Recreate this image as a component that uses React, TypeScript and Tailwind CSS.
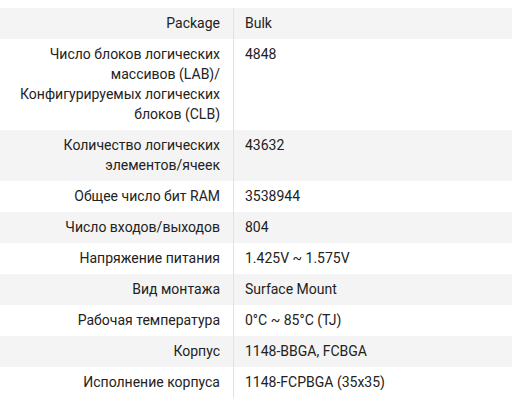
import React from "react";

const rows: [string, string][] = [
  ["Package", "Bulk"],
  ["Число блоков логических массивов (LAB)/ Конфигурируемых логических блоков (CLB)", "4848"],
  ["Количество логических элементов/ячеек", "43632"],
  ["Общее число бит RAM", "3538944"],
  ["Число входов/выходов", "804"],
  ["Напряжение питания", "1.425V ~ 1.575V"],
  ["Вид монтажа", "Surface Mount"],
  ["Рабочая температура", "0°C ~ 85°C (TJ)"],
  ["Корпус", "1148-BBGA, FCBGA"],
  ["Исполнение корпуса", "1148-FCPBGA (35x35)"],
];

export default function App() {
  return (
    <div
      className="w-[512px] h-[414px] bg-white pt-[8px] text-[14px] leading-[20px] text-[#222]"
      style={{ fontFamily: 'Roboto, "Open Sans", sans-serif' }}
    >
      {rows.map(([k, v], i) => (
        <div key={i} className={`flex ${i % 2 === 0 ? "bg-[#f4f4f4]" : "bg-white"}`}>
          <div className="w-[234px] shrink-0 text-right pr-[13px] pl-[10px] pt-[5px] pb-[6px] border-r border-[#e2e2e2]">
            {k}
          </div>
          <div className="flex-1 pl-[11px] pr-[10px] pt-[5px] pb-[6px]">{v}</div>
        </div>
      ))}
    </div>
  );
}
